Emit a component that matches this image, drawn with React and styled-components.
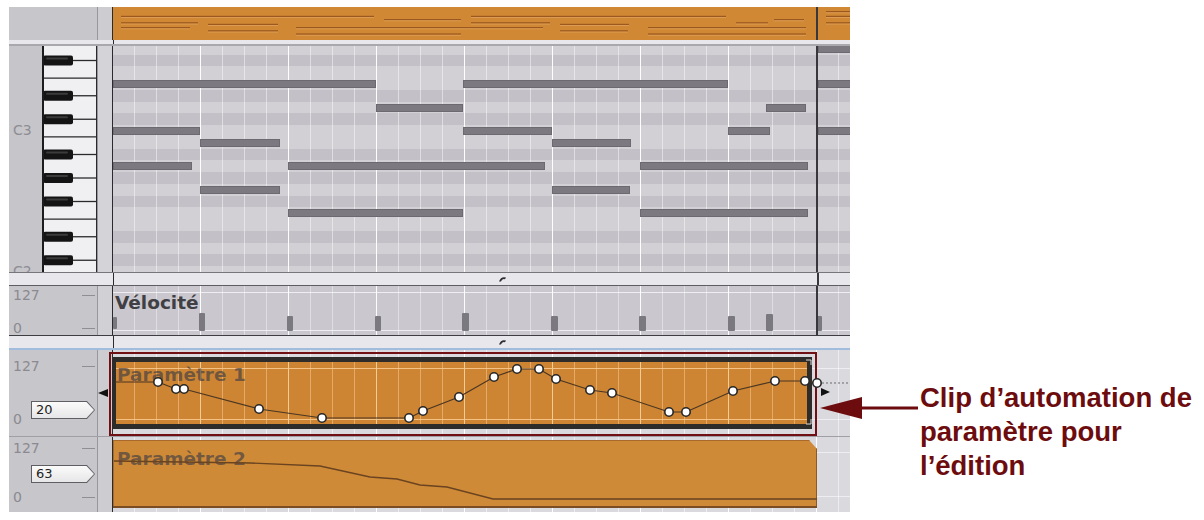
import React from "react";
import styled, { createGlobalStyle } from "styled-components";

// page x of the first grid pixel is 113, every x below is taken from there
const SEMI = 11.75;
const ROLL_H = 226;
const MARKER_X = 703;

const pitches = Array.from({ length: 20 }, (_, i) => 19 - i);
const isBlack = p => [1, 3, 6, 8, 10].includes(p % 12);
const rowTop = p => ROLL_H - (p + 0.5) * SEMI;

const notes = [
  { p: 16, x: 0, w: 263 },
  { p: 14, x: 263, w: 87 },
  { p: 16, x: 350, w: 265 },
  { p: 12, x: 0, w: 87 },
  { p: 11, x: 87, w: 80 },
  { p: 12, x: 350, w: 89 },
  { p: 11, x: 439, w: 79 },
  { p: 9, x: 0, w: 79 },
  { p: 9, x: 175, w: 257 },
  { p: 7, x: 87, w: 80 },
  { p: 7, x: 439, w: 78 },
  { p: 5, x: 175, w: 175 },
  { p: 9, x: 527, w: 168 },
  { p: 5, x: 527, w: 168 },
  { p: 12, x: 615, w: 42 },
  { p: 14, x: 653, w: 40 },
  { p: 12, x: 705, w: 40 },
  { p: 16, x: 705, w: 40 },
  { p: 19, x: 705, w: 40 },
];

const velocities = [
  { x: 0, w: 4, t: 31, h: 12 },
  { x: 86, w: 6, t: 27, h: 18 },
  { x: 174, w: 6, t: 30, h: 15 },
  { x: 262, w: 6, t: 30, h: 15 },
  { x: 349, w: 7, t: 27, h: 18 },
  { x: 438, w: 7, t: 30, h: 15 },
  { x: 526, w: 7, t: 30, h: 15 },
  { x: 615, w: 7, t: 30, h: 15 },
  { x: 653, w: 7, t: 28, h: 17 },
  { x: 703, w: 6, t: 30, h: 15 },
];

const param1 = [
  [45, 32], [63, 39], [71, 39], [146, 59], [209, 68], [296, 68], [310, 61],
  [346, 47], [381, 27], [404, 19], [426, 19], [443, 29], [477, 40], [499, 43],
  [556, 62], [573, 62], [620, 41], [662, 31], [692, 31], [704, 33],
];

const param2 = [
  [1, 24], [137, 26], [207, 29], [257, 40], [284, 42], [307, 48],
  [334, 50], [380, 62], [704, 62],
];

const GlobalStyle = createGlobalStyle`
  html, body {
    margin: 0;
    padding: 0;
    background: #ffffff;
  }
  body {
    font-family: "DejaVu Sans", "Liberation Sans", sans-serif;
  }
`;

const Page = styled.div`
  display: flex;
  align-items: flex-start;
  width: 1204px;
  height: 520px;
  padding: 7px 0 0 9px;
  box-sizing: border-box;
  overflow: hidden;
`;

const Editor = styled.div`
  display: flex;
  flex-direction: column;
  width: 841px;
  flex: none;
`;

const Lane = styled.div`
  display: flex;
  height: ${p => p.$h}px;
  flex: none;
  box-sizing: border-box;
  border-bottom: ${p => p.$under || "none"};
`;

const SidePanel = styled.div`
  width: 88px;
  flex: none;
  box-sizing: border-box;
  display: flex;
  flex-direction: column;
  justify-content: ${p => (p.$spread ? "space-between" : "flex-start")};
  padding: ${p => p.$pad || "0"};
  background: #c7c6cb;
  overflow: hidden;
`;

const KeyPanel = styled.div`
  width: 88px;
  flex: none;
  display: flex;
  background: #c6c5ca;
  overflow: hidden;
`;

const LabelCol = styled.div`
  width: 33px;
  flex: none;
  overflow: hidden;
`;

const KeysSvg = styled.svg`
  display: block;
  flex: none;
`;

const MidCol = styled.div`
  width: 16px;
  flex: none;
  box-sizing: border-box;
  display: flex;
  align-items: center;
  border-left: 1px solid #98979c;
  border-right: 1px solid #2b2b2e;
  background: ${p => p.$bg || "#cdccd1"};
`;

const GridArea = styled.div`
  position: relative;
  flex: 1;
  background: ${p => p.$bg || "#dad9de"};
  overflow: ${p => (p.$open ? "visible" : "hidden")};
`;

const BeatLines = styled.div`
  position: absolute;
  inset: 0;
  pointer-events: none;
  background-image: linear-gradient(to right, ${p => p.$bar} 1px, transparent 1px),
    linear-gradient(to right, ${p => p.$beat} 1px, transparent 1px);
  background-size: 88px 100%, 22px 100%;
  background-position: -1px 0, -1px 0;
`;

const Rows = styled.div`
  display: flex;
  flex-direction: column;
  margin-top: ${rowTop(19)}px;
`;

const KeyRow = styled.div`
  height: ${SEMI}px;
  flex: none;
  background: ${p => (p.$black ? "#c3c1c7" : "#d2d0d5")};
`;

const NoteLabel = styled.div`
  height: ${SEMI}px;
  flex: none;
  padding-left: 4px;
  font-size: 14px;
  line-height: ${SEMI}px;
  color: #8e8d93;
`;

const Note = styled.div`
  position: absolute;
  height: 8px;
  box-sizing: border-box;
  background: #7c7a80;
  border: 1px solid #6c6a70;
`;

const Marker = styled.div`
  position: absolute;
  left: ${MARKER_X}px;
  top: 0;
  bottom: 0;
  width: 2px;
  background: #38373c;
`;

const TopBarSvg = styled.svg`
  position: absolute;
  left: 0;
  top: 0;
`;

const Band = styled.div`
  display: flex;
  height: ${p => p.$h}px;
  flex: none;
  box-sizing: border-box;
  background: #e8e7eb;
  border-top: ${p => p.$over || "none"};
  border-bottom: ${p => p.$under || "none"};
`;

const BandLeft = styled.div`
  width: 104px;
  flex: none;
  border-right: 1px solid #2b2b2e;
`;

const BandGrid = styled.div`
  position: relative;
  flex: 1;
  display: flex;
  align-items: center;
  padding-left: 384px;
`;

const ScaleRow = styled.div`
  display: flex;
  align-items: center;
  justify-content: space-between;
  height: 14px;
  flex: none;
  margin-top: ${p => p.$mt || 0}px;
  font-size: 14px;
  line-height: 14px;
  color: #8b8a90;
`;

const Tick = styled.span`
  width: 13px;
  height: 1px;
  background: #8f8e94;
`;

const TagRow = styled.div`
  display: flex;
  align-items: flex-start;
  margin-top: ${p => p.$mt}px;
  padding-left: 18px;
`;

const ZeroLabel = styled.span`
  width: 18px;
  margin: 11px 0 0 -18px;
  font-size: 14px;
  line-height: 14px;
  color: #8b8a90;
`;

const TagOuter = styled.div`
  width: 64px;
  height: 18px;
  box-sizing: border-box;
  padding: 1px;
  display: flex;
  background: #5f5e63;
  clip-path: polygon(0 0, 56px 0, 64px 9px, 56px 18px, 0 18px);
`;

const TagInner = styled.div`
  flex: 1;
  padding-left: 4px;
  background: linear-gradient(#fbfbfb, #e6e6e8);
  clip-path: polygon(0 0, 54.5px 0, 62px 8px, 54.5px 16px, 0 16px);
  font-size: 13px;
  line-height: 16px;
  color: #222;
`;

const LeftArrow = styled.span`
  width: 0;
  height: 0;
  border-top: 4.5px solid transparent;
  border-bottom: 4.5px solid transparent;
  border-right: 10px solid #111;
`;

const LaneTitle = styled.div`
  position: absolute;
  left: ${p => p.$x}px;
  top: ${p => p.$y}px;
  font-size: 18.5px;
  font-weight: 700;
  line-height: 19px;
  white-space: nowrap;
  color: ${p => p.$color};
`;

const VelBar = styled.div`
  position: absolute;
  background: #7b7980;
  border-radius: 1px;
`;

const Frame = styled.div`
  position: absolute;
  left: -4px;
  top: 2px;
  width: 708px;
  height: 84px;
  box-sizing: border-box;
  border: 2.5px solid #701014;
  pointer-events: none;
`;

const AutoClip = styled.div`
  position: absolute;
  left: 0;
  top: 7px;
  width: 699px;
  height: 72px;
  box-sizing: border-box;
  border: solid #2e2c2a;
  border-width: 5px 5px 5px 3px;
  background-color: #cd8533;
  background-image: linear-gradient(
      to bottom,
      transparent 6px,
      rgba(248, 200, 140, 0.9) 6px,
      rgba(248, 200, 140, 0.9) 7px,
      transparent 7px,
      transparent 57px,
      rgba(248, 200, 140, 0.9) 57px,
      rgba(248, 200, 140, 0.9) 58px,
      transparent 58px
    ),
    linear-gradient(to right, #f6cb95 1px, transparent 1px),
    linear-gradient(to right, #e5ab66 1px, transparent 1px);
  background-size: 100% 100%, 88px 100%, 22px 100%;
  background-position: 0 0, -4px 0, -4px 0;
`;

const PlainClip = styled.div`
  position: absolute;
  left: 0;
  top: 3px;
  width: 704px;
  height: 68px;
  background: #cf8a37;
  box-shadow: inset 0 1px 0 #a9692a, inset 0 -2px 0 #7b4d20, inset -1px 0 0 #8d5924,
    inset 1px 0 0 #a9692a;
  clip-path: polygon(0 0, calc(100% - 8px) 0, 100% 9px, 100% 100%, 0 100%);
`;

const CurveSvg = styled.svg`
  position: absolute;
  left: 0;
  top: 0;
  overflow: visible;
`;

const Callout = styled.div`
  position: relative;
  flex: none;
  margin: 374px 0 0 70px;
  font-family: "Liberation Sans", Arial, sans-serif;
  font-weight: 700;
  font-size: 27.5px;
  line-height: 34px;
  color: #6d0c0e;
  white-space: nowrap;
`;

const ArrowSvg = styled.svg`
  position: absolute;
  left: -100px;
  top: 16px;
`;

const laneBg = (a, b, base) =>
  `linear-gradient(to bottom, transparent ${a}px, #eeedf1 ${a}px, #eeedf1 ${a + 1}px, transparent ${a + 1}px, transparent ${b}px, #eeedf1 ${b}px, #eeedf1 ${b + 1}px, transparent ${b + 1}px), ${base}`;

function Handle() {
  return (
    <svg width="9" height="6" viewBox="0 0 9 6">
      <path d="M1 5.5 Q3 0 8 1.5 L7 3.2 Q4 2.2 3 5.5 Z" fill="#2e2e30" />
    </svg>
  );
}

function Keyboard() {
  const cy = p => ROLL_H - p * SEMI;
  return (
    <KeysSvg width="55" height={ROLL_H} viewBox={`0 0 55 ${ROLL_H}`}>
      <rect x="0" y="0" width="55" height={ROLL_H} fill="#f0eff2" />
      {pitches
        .filter(p => p % 12 === 4 || p % 12 === 11)
        .map(p => (
          <line key={p} x1="0" x2="55" y1={cy(p) - SEMI / 2} y2={cy(p) - SEMI / 2} stroke="#2a2a2a" strokeWidth="1.3" />
        ))}
      {pitches.filter(isBlack).map(p => (
        <g key={p}>
          <line x1="30" x2="55" y1={cy(p)} y2={cy(p)} stroke="#2a2a2a" strokeWidth="1.3" />
          <rect x="1" y={cy(p) - 5} width="30" height="10" rx="2" fill="#141414" />
          <rect x="4" y={cy(p) - 3} width="22" height="2" rx="1" fill="#3b3b3b" />
        </g>
      ))}
      <line x1="1" x2="1" y1="0" y2={ROLL_H} stroke="#1c1c1c" strokeWidth="2" />
      <line x1="54.5" x2="54.5" y1="0" y2={ROLL_H} stroke="#2a2a2a" />
    </KeysSvg>
  );
}

function Overview() {
  const y = p => 4 + (19 - p) * 1.6;
  return (
    <TopBarSvg width="737" height="33">
      {notes.map((n, i) => (
        <g key={i}>
          <rect x={n.x + 8} y={y(n.p)} width={Math.max(n.w - 10, 4)} height="1.4" fill="#93501b" opacity="0.85" />
          <rect x={n.x + 8} y={y(n.p) + 1.4} width={Math.max(n.w - 10, 4)} height="0.8" fill="#e9ac66" opacity="0.8" />
        </g>
      ))}
    </TopBarSvg>
  );
}

export default function App() {
  const path1 = [[2, 32], ...param1].map(([x, y]) => `${x},${y}`).join(" ");
  const path2 = param2.map(([x, y]) => `${x},${y}`).join(" ");
  return (
    <Page>
      <GlobalStyle />
      <Editor>
        <Lane $h={33}>
          <SidePanel />
          <MidCol />
          <GridArea $bg="#d08835">
            <Overview />
            <Marker />
          </GridArea>
        </Lane>

        <Band $h={6} $under="2px solid #a9a8ad">
          <BandLeft />
        </Band>

        <Lane $h={ROLL_H}>
          <KeyPanel>
            <LabelCol>
              <Rows>
                {pitches.map(p => (
                  <NoteLabel key={p}>{p === 12 ? "C3" : p === 0 ? "C2" : ""}</NoteLabel>
                ))}
              </Rows>
            </LabelCol>
            <Keyboard />
          </KeyPanel>
          <MidCol $bg="#d4d3d8" />
          <GridArea>
            <Rows>
              {pitches.map(p => (
                <KeyRow key={p} $black={isBlack(p)} />
              ))}
            </Rows>
            <BeatLines $bar="rgba(255,255,255,0.95)" $beat="rgba(255,255,255,0.45)" />
            {notes.map((n, i) => (
              <Note key={i} style={{ left: n.x, top: rowTop(n.p) + 1.9, width: n.w }} />
            ))}
            <Marker />
          </GridArea>
        </Lane>

        <Band $h={14} $over="1px solid #77767b" $under="1px solid #5e5d62">
          <BandLeft />
          <BandGrid>
            <Handle />
            <Marker />
          </BandGrid>
        </Band>

        <Lane $h={49}>
          <SidePanel $spread $pad="2px 2px 0 4px">
            <ScaleRow>
              127
              <Tick />
            </ScaleRow>
            <ScaleRow>
              0
              <Tick />
            </ScaleRow>
          </SidePanel>
          <MidCol $bg="#d1d0d5" />
          <GridArea $bg={laneBg(6, 44, "#cac8ce")}>
            <BeatLines $bar="rgba(255,255,255,0.9)" $beat="rgba(255,255,255,0.4)" />
            <LaneTitle $x={2} $y={7} $color="#404044">
              Vélocité
            </LaneTitle>
            {velocities.map((v, i) => (
              <VelBar key={i} style={{ left: v.x, top: v.t, width: v.w, height: v.h }} />
            ))}
            <Marker />
          </GridArea>
        </Lane>

        <Band $h={15} $over="1px solid #3e3d42" $under="2px solid #a2bcdf">
          <BandLeft />
          <BandGrid>
            <Handle />
          </BandGrid>
        </Band>

        <Lane $h={87} $under="1px solid #a09fa5">
          <SidePanel $pad="9px 2px 0 4px">
            <ScaleRow>
              127
              <Tick />
            </ScaleRow>
            <TagRow $mt={28}>
              <ZeroLabel>0</ZeroLabel>
              <TagOuter>
                <TagInner>20</TagInner>
              </TagOuter>
            </TagRow>
          </SidePanel>
          <MidCol>
            <LeftArrow />
          </MidCol>
          <GridArea $open $bg={laneBg(18, 69, "#dad9de")}>
            <BeatLines $bar="rgba(255,255,255,0.9)" $beat="rgba(255,255,255,0.5)" />
            <AutoClip>
              <LaneTitle $x={1} $y={3} $color="rgba(66, 62, 68, 0.66)">
                Paramètre 1
              </LaneTitle>
            </AutoClip>
            <Frame />
            <CurveSvg width="737" height="86">
              <polyline points={path1} fill="none" stroke="#4a3522" strokeWidth="1.2" />
              <line x1="709" x2="737" y1="33" y2="33" stroke="#6a6a6e" strokeWidth="1" strokeDasharray="2 2" />
              <polygon points="708,38 717,42 708,46" fill="#111" />
              <polyline points="693,10 698,10 698,15" fill="none" stroke="#d9d9d9" strokeWidth="1" />
              <polyline points="698,69 698,74 693,74" fill="none" stroke="#d9d9d9" strokeWidth="1" />
              {param1.map(([x, y], i) => (
                <circle key={i} cx={x} cy={y} r="4.2" fill="#ffffff" stroke="#262626" strokeWidth="1.6" />
              ))}
            </CurveSvg>
          </GridArea>
        </Lane>

        <Lane $h={75}>
          <SidePanel $pad="4px 2px 0 4px">
            <ScaleRow>
              127
              <Tick />
            </ScaleRow>
            <TagRow $mt={10}>
              <TagOuter>
                <TagInner>63</TagInner>
              </TagOuter>
            </TagRow>
            <ScaleRow $mt={7}>
              0
              <Tick />
            </ScaleRow>
          </SidePanel>
          <MidCol />
          <GridArea $bg={laneBg(15, 59, "#dad9de")}>
            <BeatLines $bar="rgba(255,255,255,0.9)" $beat="rgba(255,255,255,0.5)" />
            <PlainClip>
              <LaneTitle $x={4} $y={9} $color="rgba(66, 62, 68, 0.66)">
                Paramètre 2
              </LaneTitle>
            </PlainClip>
            <CurveSvg width="737" height="75">
              <polyline points={path2} fill="none" stroke="#6a4320" strokeWidth="1.4" />
            </CurveSvg>
          </GridArea>
        </Lane>
      </Editor>

      <Callout>
        <ArrowSvg width="100" height="22" viewBox="0 0 100 22">
          <polygon points="0,11 42,0 42,22" fill="#6d0c0e" />
          <rect x="40" y="9.5" width="58" height="3" fill="#6d0c0e" />
        </ArrowSvg>
        Clip d’automation de
        <br />
        paramètre pour
        <br />
        l’édition
      </Callout>
    </Page>
  );
}
